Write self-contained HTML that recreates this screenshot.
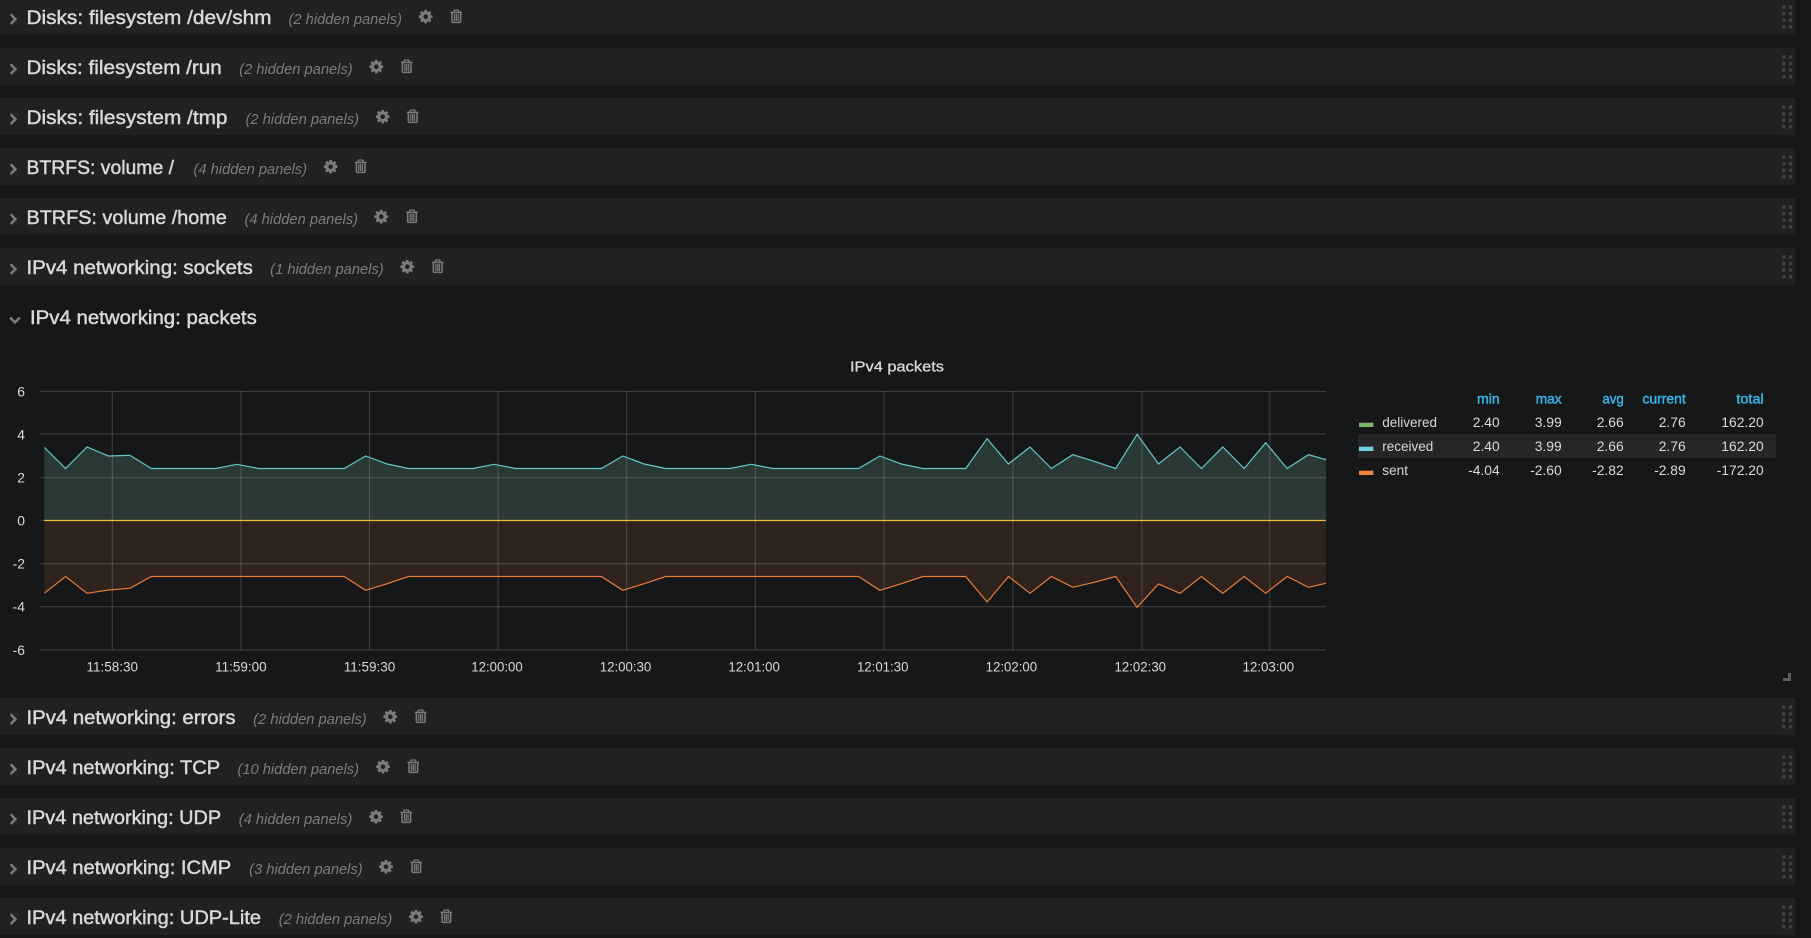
<!DOCTYPE html>
<html lang="en">
<head>
<meta charset="utf-8">
<title>IPv4 networking</title>
<style>
html,body{margin:0;padding:0;background:#161719;width:1811px;height:938px;overflow:hidden}
svg{display:block}
text{font-family:"Liberation Sans",sans-serif}
.t{font-size:19.6px;fill:#d8d9da;stroke:#d8d9da;stroke-width:.45px}
.h{font-size:14.4px;font-style:italic;fill:#7b7b7b}
.l{font-size:13.86px;fill:#d8d9da}
.e{text-anchor:end}
.b{fill:#33b5e5;stroke:#33b5e5;stroke-width:.45px}
.m{text-anchor:middle}
</style>
</head>
<body>
<svg width="1811" height="938" viewBox="0 0 1811 938" xmlns="http://www.w3.org/2000/svg">
<defs>
<symbol id="gear" viewBox="0 0 1792 1792"><path fill="#7b7b7b" d="M1152 896q0-106-75-181t-181-75-181 75-75 181 75 181 181 75 181-75 75-181zm512-109v222q0 12-8 23t-20 13l-185 28q-19 54-39 91 35 50 107 138 10 12 10 25t-9 23q-27 37-99 108t-94 71q-12 0-26-9l-138-108q-44 23-91 38-16 136-29 186-7 28-36 28h-222q-14 0-24.500-8.500t-11.500-21.500l-28-184q-49-16-90-37l-141 107q-10 9-25 9-14 0-25-11-126-114-165-168-7-10-7-23 0-12 8-23 15-21 51-66.500t54-70.500q-27-50-41-99l-183-27q-13-2-21-12.500t-8-23.500v-222q0-12 8-23t19-13l186-28q14-46 39-92-40-57-107-138-10-12-10-24 0-10 9-23 26-36 98.500-107.500t94.500-71.500q13 0 26 10l138 107q44-23 91-38 16-136 29-186 7-28 36-28h222q14 0 24.500 8.500t11.500 21.500l28 184q49 16 90 37l142-107q9-9 24-9 13 0 25 10 129 119 165 170 7 8 7 22 0 12-8 23-15 21-51 66.500t-54 70.500q26 50 41 98l183 28q13 2 21 12.500t8 23.500z"/></symbol>
<symbol id="trash" viewBox="0 0 12 14"><g fill="none" stroke="#7b7b7b"><path stroke-width="1.300" d="M3.600 2.600V1.700Q3.600.7 4.600.7H7.400Q8.400.7 8.400 1.700V2.600"/><path stroke-width="1.500" d="M.2 3.100H11.800"/><path stroke-width="1.600" d="M1.700 3V12Q1.700 13.200 3 13.200H9Q10.300 13.200 10.300 12V3"/><path stroke-width="1.250" d="M4.200 4.500V12M6 4.500V12M7.800 4.500V12"/></g></symbol>
<symbol id="chev" viewBox="0 0 20 37"><path fill="none" stroke="#7b7b7b" stroke-width="2.500" d="M10.700 16.300L15.400 21.200L10.700 26"/></symbol>
<symbol id="drag" viewBox="0 0 20 37"><g fill="#414144"><rect x="2.100" y="7.400" width="3.300" height="3.300"/><rect x="8.900" y="7.400" width="3.300" height="3.300"/><rect x="2.100" y="14.100" width="3.300" height="3.300"/><rect x="8.900" y="14.100" width="3.300" height="3.300"/><rect x="2.100" y="20.600" width="3.300" height="3.300"/><rect x="8.900" y="20.600" width="3.300" height="3.300"/><rect x="2.100" y="27.100" width="3.300" height="3.300"/><rect x="8.900" y="27.100" width="3.300" height="3.300"/></g></symbol>
<clipPath id="plot"><rect x="44.200" y="380" width="1281.800" height="280"/></clipPath>
</defs>

<rect width="1811" height="938" fill="#161719"/>

<!-- Collapsed rows -->
<rect x="0" y="-2" width="1795" height="37" fill="#212124"/>
<use href="#chev" x="0" y="-2" width="20" height="37"/>
<text class="t" x="26.500" y="24" textLength="245" lengthAdjust="spacingAndGlyphs">Disks: filesystem /dev/shm</text>
<text class="h" x="288.500" y="24" textLength="113.500" lengthAdjust="spacingAndGlyphs">(2 hidden panels)</text>
<use href="#gear" x="417.700" y="8.700" width="16" height="16"/>
<use href="#trash" x="450.300" y="9.300" width="12" height="14"/>
<use href="#drag" x="1780" y="-2" width="20" height="37"/>

<rect x="0" y="48" width="1795" height="37" fill="#212124"/>
<use href="#chev" x="0" y="48" width="20" height="37"/>
<text class="t" x="26.500" y="74" textLength="195.300" lengthAdjust="spacingAndGlyphs">Disks: filesystem /run</text>
<text class="h" x="239.200" y="74" textLength="113.500" lengthAdjust="spacingAndGlyphs">(2 hidden panels)</text>
<use href="#gear" x="368.300" y="58.700" width="16" height="16"/>
<use href="#trash" x="400.700" y="59.300" width="12" height="14"/>
<use href="#drag" x="1780" y="48" width="20" height="37"/>

<rect x="0" y="98" width="1795" height="37" fill="#212124"/>
<use href="#chev" x="0" y="98" width="20" height="37"/>
<text class="t" x="26.500" y="124" textLength="201" lengthAdjust="spacingAndGlyphs">Disks: filesystem /tmp</text>
<text class="h" x="245.500" y="124" textLength="113.500" lengthAdjust="spacingAndGlyphs">(2 hidden panels)</text>
<use href="#gear" x="374.700" y="108.700" width="16" height="16"/>
<use href="#trash" x="406.700" y="109.300" width="12" height="14"/>
<use href="#drag" x="1780" y="98" width="20" height="37"/>

<rect x="0" y="148" width="1795" height="37" fill="#212124"/>
<use href="#chev" x="0" y="148" width="20" height="37"/>
<text class="t" x="26.500" y="174" textLength="147.500" lengthAdjust="spacingAndGlyphs">BTRFS: volume /</text>
<text class="h" x="193.500" y="174" textLength="113.500" lengthAdjust="spacingAndGlyphs">(4 hidden panels)</text>
<use href="#gear" x="322.700" y="158.700" width="16" height="16"/>
<use href="#trash" x="354.700" y="159.300" width="12" height="14"/>
<use href="#drag" x="1780" y="148" width="20" height="37"/>

<rect x="0" y="198" width="1795" height="37" fill="#212124"/>
<use href="#chev" x="0" y="198" width="20" height="37"/>
<text class="t" x="26.500" y="224" textLength="200.300" lengthAdjust="spacingAndGlyphs">BTRFS: volume /home</text>
<text class="h" x="244.500" y="224" textLength="113.500" lengthAdjust="spacingAndGlyphs">(4 hidden panels)</text>
<use href="#gear" x="373.300" y="208.700" width="16" height="16"/>
<use href="#trash" x="406" y="209.300" width="12" height="14"/>
<use href="#drag" x="1780" y="198" width="20" height="37"/>

<rect x="0" y="248" width="1795" height="37" fill="#212124"/>
<use href="#chev" x="0" y="248" width="20" height="37"/>
<text class="t" x="26.500" y="274" textLength="226.300" lengthAdjust="spacingAndGlyphs">IPv4 networking: sockets</text>
<text class="h" x="270.200" y="274" textLength="113.500" lengthAdjust="spacingAndGlyphs">(1 hidden panels)</text>
<use href="#gear" x="399.300" y="258.700" width="16" height="16"/>
<use href="#trash" x="431.700" y="259.300" width="12" height="14"/>
<use href="#drag" x="1780" y="248" width="20" height="37"/>

<!-- Expanded row -->
<path fill="none" stroke="#7b7b7b" stroke-width="2.500" d="M10.200 317.500L15 322.500L19.800 317.500"/>
<text class="t" x="30" y="324" textLength="226.800" lengthAdjust="spacingAndGlyphs">IPv4 networking: packets</text>

<!-- Panel -->
<text x="850" y="371.500" font-size="14.400" fill="#d8d9da" stroke="#d8d9da" stroke-width=".3" textLength="94" lengthAdjust="spacingAndGlyphs">IPv4 packets</text>

<!-- Series areas -->
<g clip-path="url(#plot)">
<g transform="translate(-.5 0)">
<polygon fill="#2b3936" points="44.700,520.500 44.700,447.300 66.100,468.500 87.500,447 109,456 130.400,455.300 151.800,468.500 216.100,468.500 237.500,464.300 259,468.500 344.700,468.500 366.100,456 387.600,464 409,468.500 473.300,468.500 494.700,464.300 516.100,468.500 601.900,468.500 623.300,456 644.700,464 666.100,468.500 730.400,468.500 751.900,464.300 773.300,468.500 859,468.500 880.400,456 901.900,464 923.300,468.500 966.200,468.500 987.600,438.700 1009,464 1030.500,447 1051.900,468.500 1073.300,454.700 1094.700,461.300 1116.200,468.500 1137.600,434.300 1159,464 1180.500,447 1201.900,468.500 1223.300,447 1244.700,468.500 1266.200,442.700 1287.600,468.500 1309,454.700 1330.500,460.700 1330.500,520.500"/>
<polygon fill="#2e231d" points="44.700,520.500 44.700,593.300 66.100,576.500 87.500,593.300 109,590 130.400,588.300 151.800,576.500 344.700,576.500 366.100,590.300 387.600,583.700 409,576.500 601.900,576.500 623.300,590.300 644.700,583.700 666.100,576.500 859,576.500 880.400,590.300 901.900,583.700 923.300,576.500 966.200,576.500 987.600,602 1009,576.500 1030.500,593.300 1051.900,576.500 1073.300,587.300 1094.700,582.300 1116.200,576.500 1137.600,607.300 1159,584 1180.500,593.300 1201.900,576.500 1223.300,593.300 1244.700,576.500 1266.200,593.300 1287.600,576.500 1309,587.300 1330.500,582.300 1330.500,520.500"/>
</g>
</g>

<!-- Grid -->
<g stroke="#c8c8c8" stroke-opacity=".2" stroke-width="1.150" fill="none">
<path d="M40.300 391.500H1326M40.300 434H1326M40.300 477.700H1326M40.300 520.500H1326M40.300 563.700H1326M40.300 606.700H1326M40.300 650H1326"/>
<path d="M112.300 391V650M240.900 391V650M369.500 391V650M498.100 391V650M626.700 391V650M755.300 391V650M883.900 391V650M1012.900 391V650M1141.900 391V650M1269.700 391V650"/>
</g>

<!-- Series lines -->
<g clip-path="url(#plot)" fill="none" stroke-width="1.200">
<g transform="translate(-.5 0)">
<polyline stroke="#eab839" points="44.700,520.500 1330,520.500"/>
<polyline stroke="#65c6ca" points="44.700,447.300 66.100,468.500 87.500,447 109,456 130.400,455.300 151.800,468.500 216.100,468.500 237.500,464.300 259,468.500 344.700,468.500 366.100,456 387.600,464 409,468.500 473.300,468.500 494.700,464.300 516.100,468.500 601.900,468.500 623.300,456 644.700,464 666.100,468.500 730.400,468.500 751.900,464.300 773.300,468.500 859,468.500 880.400,456 901.900,464 923.300,468.500 966.200,468.500 987.600,438.700 1009,464 1030.500,447 1051.900,468.500 1073.300,454.700 1094.700,461.300 1116.200,468.500 1137.600,434.300 1159,464 1180.500,447 1201.900,468.500 1223.300,447 1244.700,468.500 1266.200,442.700 1287.600,468.500 1309,454.700 1330.500,460.700"/>
<polyline stroke="#e57c38" points="44.700,593.300 66.100,576.500 87.500,593.300 109,590 130.400,588.300 151.800,576.500 344.700,576.500 366.100,590.300 387.600,583.700 409,576.500 601.900,576.500 623.300,590.300 644.700,583.700 666.100,576.500 859,576.500 880.400,590.300 901.900,583.700 923.300,576.500 966.200,576.500 987.600,602 1009,576.500 1030.500,593.300 1051.900,576.500 1073.300,587.300 1094.700,582.300 1116.200,576.500 1137.600,607.300 1159,584 1180.500,593.300 1201.900,576.500 1223.300,593.300 1244.700,576.500 1266.200,593.300 1287.600,576.500 1309,587.300 1330.500,582.300"/>
</g>
</g>

<!-- Y axis labels -->
<text class="l e" x="25" y="396.700">6</text>
<text class="l e" x="25" y="439.500">4</text>
<text class="l e" x="25" y="482.700">2</text>
<text class="l e" x="25" y="525.500">0</text>
<text class="l e" x="25" y="568.700">-2</text>
<text class="l e" x="25" y="611.700">-4</text>
<text class="l e" x="25" y="655">-6</text>

<!-- X axis labels -->
<text class="l m" x="112.300" y="671.300" textLength="51.500" lengthAdjust="spacingAndGlyphs">11:58:30</text>
<text class="l m" x="240.900" y="671.300" textLength="51.500" lengthAdjust="spacingAndGlyphs">11:59:00</text>
<text class="l m" x="369.500" y="671.300" textLength="51.500" lengthAdjust="spacingAndGlyphs">11:59:30</text>
<text class="l m" x="497" y="671.300" textLength="51.500" lengthAdjust="spacingAndGlyphs">12:00:00</text>
<text class="l m" x="625.500" y="671.300" textLength="51.500" lengthAdjust="spacingAndGlyphs">12:00:30</text>
<text class="l m" x="754.100" y="671.300" textLength="51.500" lengthAdjust="spacingAndGlyphs">12:01:00</text>
<text class="l m" x="882.700" y="671.300" textLength="51.500" lengthAdjust="spacingAndGlyphs">12:01:30</text>
<text class="l m" x="1011.400" y="671.300" textLength="51.500" lengthAdjust="spacingAndGlyphs">12:02:00</text>
<text class="l m" x="1140.300" y="671.300" textLength="51.500" lengthAdjust="spacingAndGlyphs">12:02:30</text>
<text class="l m" x="1268.400" y="671.300" textLength="51.500" lengthAdjust="spacingAndGlyphs">12:03:00</text>

<!-- Legend -->
<rect x="1358" y="434" width="418" height="24" fill="#262628"/>
<text class="l e b" x="1499.700" y="403.700" textLength="22.700" lengthAdjust="spacingAndGlyphs">min</text>
<text class="l e b" x="1561.700" y="403.700" textLength="26" lengthAdjust="spacingAndGlyphs">max</text>
<text class="l e b" x="1623.700" y="403.700" textLength="21.300" lengthAdjust="spacingAndGlyphs">avg</text>
<text class="l e b" x="1685.700" y="403.700" textLength="43.300" lengthAdjust="spacingAndGlyphs">current</text>
<text class="l e b" x="1763.700" y="403.700" textLength="27.300" lengthAdjust="spacingAndGlyphs">total</text>

<rect x="1359" y="422.700" width="14.300" height="4.300" fill="#7eb26d"/>
<text class="l" x="1382.300" y="427" textLength="54.700" lengthAdjust="spacingAndGlyphs">delivered</text>
<text class="l e" x="1499.700" y="427">2.40</text>
<text class="l e" x="1561.700" y="427">3.99</text>
<text class="l e" x="1623.700" y="427">2.66</text>
<text class="l e" x="1685.700" y="427">2.76</text>
<text class="l e" x="1763.700" y="427">162.20</text>

<rect x="1359" y="446.700" width="14.300" height="4.300" fill="#6ed0e0"/>
<text class="l" x="1382.300" y="451" textLength="51" lengthAdjust="spacingAndGlyphs">received</text>
<text class="l e" x="1499.700" y="451">2.40</text>
<text class="l e" x="1561.700" y="451">3.99</text>
<text class="l e" x="1623.700" y="451">2.66</text>
<text class="l e" x="1685.700" y="451">2.76</text>
<text class="l e" x="1763.700" y="451">162.20</text>

<rect x="1359" y="470.700" width="14.300" height="4.300" fill="#ef843c"/>
<text class="l" x="1382.300" y="475" textLength="25.700" lengthAdjust="spacingAndGlyphs">sent</text>
<text class="l e" x="1499.700" y="475">-4.04</text>
<text class="l e" x="1561.700" y="475">-2.60</text>
<text class="l e" x="1623.700" y="475">-2.82</text>
<text class="l e" x="1685.700" y="475">-2.89</text>
<text class="l e" x="1763.700" y="475">-172.20</text>

<!-- Resize handle -->
<path fill="#5f5f61" d="M1788 673h3v8h-8v-3h5z"/>

<!-- Rows below panel -->
<rect x="0" y="698" width="1795" height="37" fill="#212124"/>
<use href="#chev" x="0" y="698" width="20" height="37"/>
<text class="t" x="26.500" y="724" textLength="209" lengthAdjust="spacingAndGlyphs">IPv4 networking: errors</text>
<text class="h" x="253.200" y="724" textLength="113.500" lengthAdjust="spacingAndGlyphs">(2 hidden panels)</text>
<use href="#gear" x="382.300" y="708.700" width="16" height="16"/>
<use href="#trash" x="414.700" y="709.300" width="12" height="14"/>
<use href="#drag" x="1780" y="698" width="20" height="37"/>

<rect x="0" y="748" width="1795" height="37" fill="#212124"/>
<use href="#chev" x="0" y="748" width="20" height="37"/>
<text class="t" x="26.500" y="774" textLength="193.700" lengthAdjust="spacingAndGlyphs">IPv4 networking: TCP</text>
<text class="h" x="237.500" y="774" textLength="121.500" lengthAdjust="spacingAndGlyphs">(10 hidden panels)</text>
<use href="#gear" x="375" y="758.700" width="16" height="16"/>
<use href="#trash" x="407.300" y="759.300" width="12" height="14"/>
<use href="#drag" x="1780" y="748" width="20" height="37"/>

<rect x="0" y="798" width="1795" height="37" fill="#212124"/>
<use href="#chev" x="0" y="798" width="20" height="37"/>
<text class="t" x="26.500" y="824" textLength="194.700" lengthAdjust="spacingAndGlyphs">IPv4 networking: UDP</text>
<text class="h" x="238.800" y="824" textLength="113.500" lengthAdjust="spacingAndGlyphs">(4 hidden panels)</text>
<use href="#gear" x="368" y="808.700" width="16" height="16"/>
<use href="#trash" x="400.300" y="809.300" width="12" height="14"/>
<use href="#drag" x="1780" y="798" width="20" height="37"/>

<rect x="0" y="848" width="1795" height="37" fill="#212124"/>
<use href="#chev" x="0" y="848" width="20" height="37"/>
<text class="t" x="26.500" y="874" textLength="204.700" lengthAdjust="spacingAndGlyphs">IPv4 networking: ICMP</text>
<text class="h" x="249.200" y="874" textLength="113.500" lengthAdjust="spacingAndGlyphs">(3 hidden panels)</text>
<use href="#gear" x="378" y="858.700" width="16" height="16"/>
<use href="#trash" x="410.300" y="859.300" width="12" height="14"/>
<use href="#drag" x="1780" y="848" width="20" height="37"/>

<rect x="0" y="898" width="1795" height="37" fill="#212124"/>
<use href="#chev" x="0" y="898" width="20" height="37"/>
<text class="t" x="26.500" y="924" textLength="234.500" lengthAdjust="spacingAndGlyphs">IPv4 networking: UDP-Lite</text>
<text class="h" x="278.800" y="924" textLength="113.500" lengthAdjust="spacingAndGlyphs">(2 hidden panels)</text>
<use href="#gear" x="408" y="908.700" width="16" height="16"/>
<use href="#trash" x="440.300" y="909.300" width="12" height="14"/>
<use href="#drag" x="1780" y="898" width="20" height="37"/>
</svg>
</body>
</html>
